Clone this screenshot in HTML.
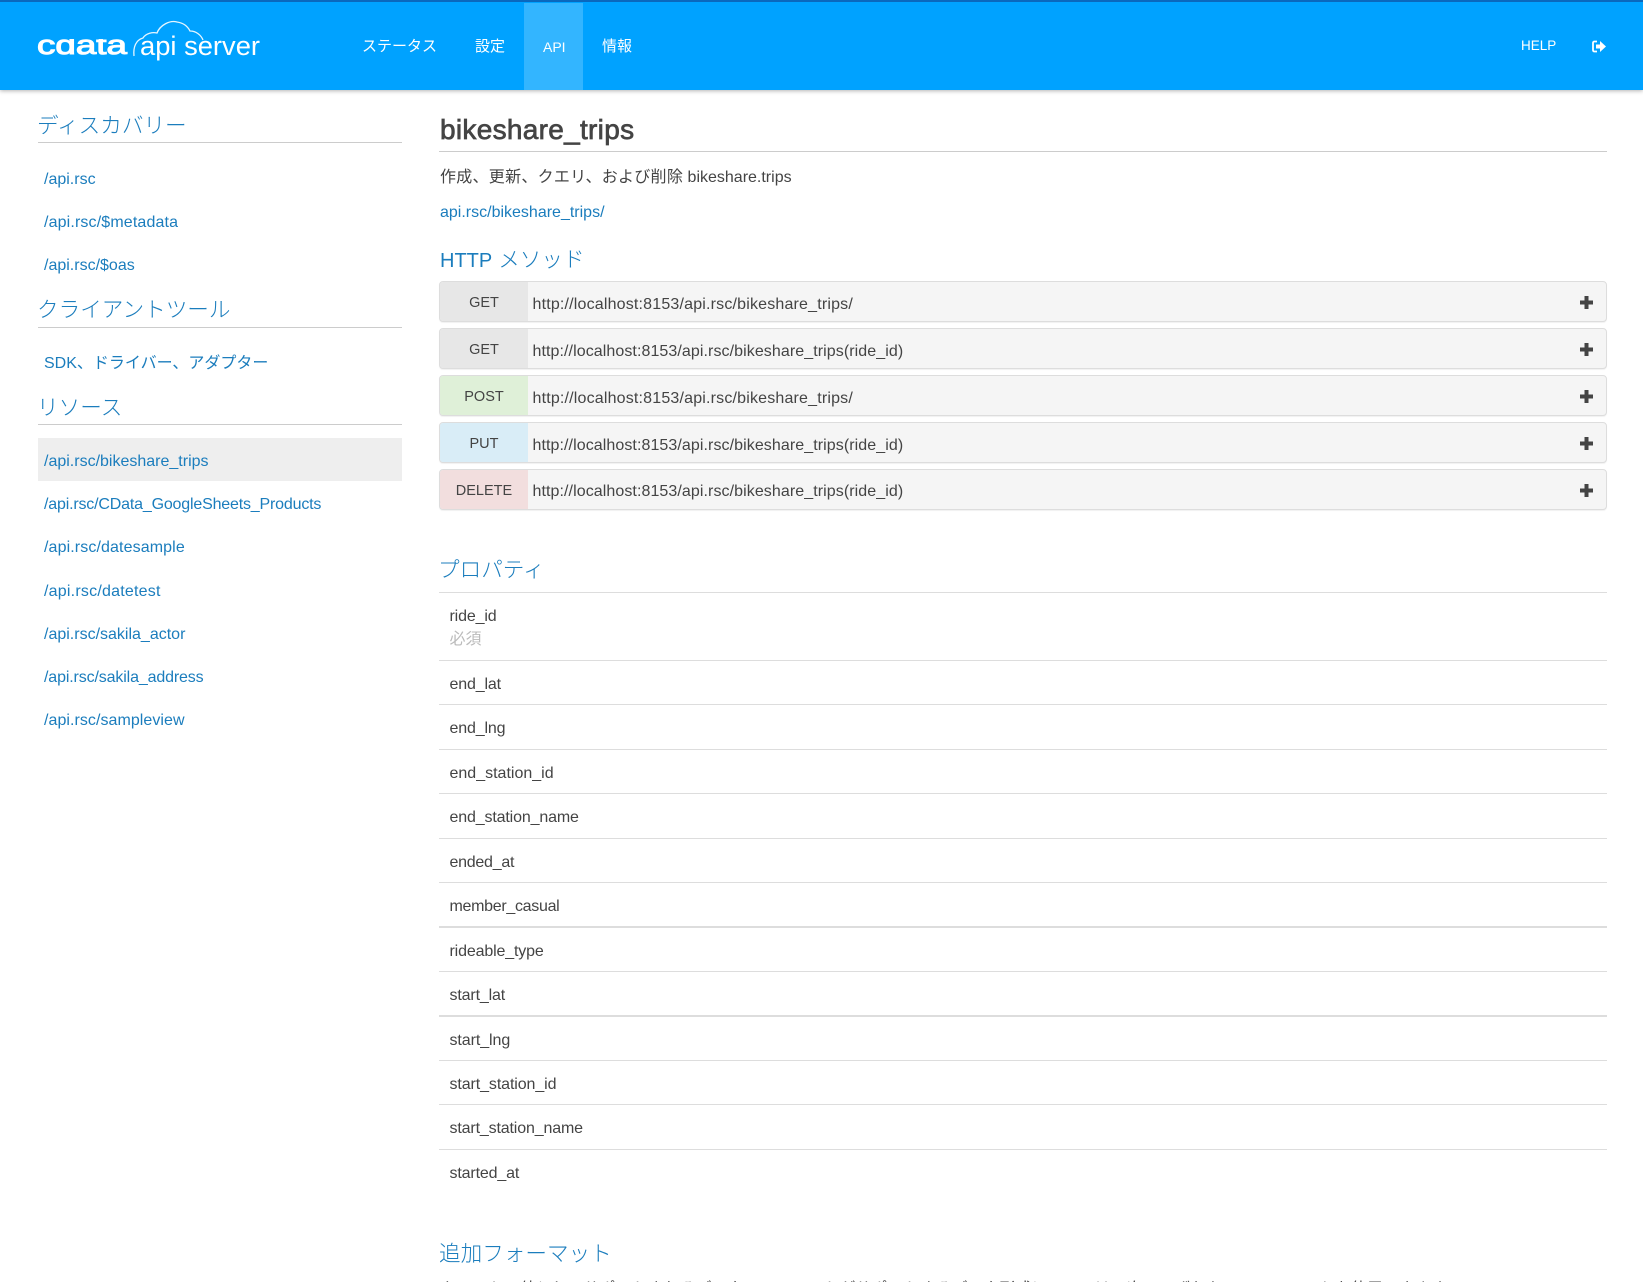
<!DOCTYPE html>
<html lang="ja"><head><meta charset="utf-8"><title>bikeshare_trips</title>
<style>
html,body{margin:0;padding:0;background:#fff;height:1282px;overflow:hidden}
#w{position:relative;width:1643px;height:1282px;overflow:hidden;font-family:"Liberation Sans","Noto Sans CJK JP",sans-serif;font-size:16px;color:#444}
.t{position:absolute;white-space:nowrap;line-height:20px;height:20px;margin-top:1px}
.a{color:#1b7dbd}
.h{color:#1b7dbd;font-size:21.600px;font-weight:300;line-height:30px;height:30px;margin-top:1px}
.n{color:#fff;font-size:15px}
.q{letter-spacing:-.15px}
.l{position:absolute;height:1px;background:#ccc}
.p{position:absolute;left:439px;width:1168px;height:1px;background:#ddd}
.r{position:absolute;left:439px;width:1166px;height:39px;border:1px solid #ddd;border-radius:4px;background:#f5f5f5;overflow:hidden;box-shadow:0 1px 1px rgba(0,0,0,.06)}
.m{position:absolute;left:0;top:4px;width:88px;height:35px;line-height:35px;text-align:center;font-size:14.500px;color:#444}
.mb{position:absolute;left:0;top:0;width:88px;height:39px}
.u{position:absolute;left:92.500px;top:3px;line-height:40px;white-space:nowrap;color:#444;letter-spacing:.08px}
.s{letter-spacing:.18px}
.x{position:absolute;left:1140px;top:14px}
</style></head><body><div id="w">
<div style="position:absolute;left:0;top:0;width:1643px;height:90px;background:#00a2ff;box-shadow:0 1px 4px rgba(0,0,0,.3)"></div>
<div style="position:absolute;left:0;top:0;width:1643px;height:2px;background:#0a68bd"></div>
<div style="position:absolute;left:524px;top:3px;width:59px;height:87px;background:#33b5ff"></div>
<svg style="position:absolute;left:0;top:0" width="300" height="90">
<defs><clipPath id="c"><rect x="30" y="39" width="100" height="16"/></clipPath></defs>
<path d="M134 56C133 47 136 40 143 38C146 33 153 32 157 33C160 25 170 20 177 22C184 23 188 27 190 31C196 31 201 35 203 40" fill="none" stroke="#fff" stroke-width="1.300" opacity=".9"/>
<g clip-path="url(#c)"><text x="37" y="54" font-family="Liberation Sans" font-size="27" fill="#fff" stroke="#fff" stroke-width="1" textLength="90" lengthAdjust="spacingAndGlyphs">cdata</text></g>
<text x="140" y="55" font-family="Liberation Sans" font-size="27" fill="#fff" textLength="120" lengthAdjust="spacingAndGlyphs">api server</text>
</svg>
<div class="t n" style="left:362px;top:36px">ステータス</div>
<div class="t n" style="left:475px;top:36px">設定</div>
<div class="t n" style="left:543px;top:36px;font-size:14px">API</div>
<div class="t n" style="left:602px;top:36px">情報</div>
<div class="t n" style="left:1521px;top:36px;font-size:13.500px;margin-top:0">HELP</div>
<svg style="position:absolute;left:1592px;top:40px" width="14" height="13" viewBox="0 0 14 13"><path d="M5 1.500H2.500Q1 1.500 1 3V10Q1 11.500 2.500 11.500H5" fill="none" stroke="#fff" stroke-width="1.800"/><path d="M4 4.500H8V1L14 6.500L8 12V8.500H4Z" fill="#fff"/></svg>

<div class="t h" style="left:37px;top:110px">ディスカバリー</div><div class="l" style="left:38px;top:142px;width:364px"></div>
<div class="t a" style="left:44px;top:169px">/api.rsc</div>
<div class="t a" style="left:44px;top:212px;letter-spacing:.14px">/api.rsc/$metadata</div>
<div class="t a" style="left:44px;top:255px">/api.rsc/$oas</div>
<div class="t h" style="left:37px;top:294px">クライアントツール</div><div class="l" style="left:38px;top:327px;width:364px"></div>
<div class="t a" style="left:44px;top:353px">SDK、ドライバー、アダプター</div>
<div class="t h" style="left:37px;top:392px">リソース</div><div class="l" style="left:38px;top:424px;width:364px"></div>
<div style="position:absolute;left:38px;top:438px;width:364px;height:43px;background:#eee"></div>
<div class="t a" style="left:44px;top:451px">/api.rsc/bikeshare_trips</div>
<div class="t a" style="left:44px;top:494px;letter-spacing:-.18px">/api.rsc/CData_GoogleSheets_Products</div>
<div class="t a" style="left:44px;top:537px;letter-spacing:.11px">/api.rsc/datesample</div>
<div class="t a" style="left:44px;top:581px;letter-spacing:.22px">/api.rsc/datetest</div>
<div class="t a" style="left:44px;top:624px">/api.rsc/sakila_actor</div>
<div class="t a" style="left:44px;top:667px;letter-spacing:-.14px">/api.rsc/sakila_address</div>
<div class="t a" style="left:44px;top:710px;letter-spacing:.05px">/api.rsc/sampleview</div>

<div class="t" style="left:440px;top:115px;height:30px;line-height:30px;font-size:28px;margin-top:0;letter-spacing:.3px;-webkit-text-stroke:.7px #444">bikeshare_trips</div>
<div class="l" style="left:439px;top:151px;width:1168px"></div>
<div class="t" style="left:440px;top:167px"><span style="letter-spacing:.27px">作成、更新、クエリ、および削除</span> bikeshare.trips</div>
<div class="t a" style="left:440px;top:202px">api.rsc/bikeshare_trips/</div>
<div class="t h" style="left:440px;top:244px"><span style="font-size:20px">HTTP</span> メソッド</div>

<div class="r" style="top:281px"><div class="mb" style="background:#e7e7e7"></div><div class="m">GET</div><div class="u s">http://localhost:8153/api.rsc/bikeshare_trips/</div><svg class="x" width="13" height="13"><path d="M4.500 0h4v4.500h4.500v4H8.500v4.500h-4V8.500H0v-4h4.500z" fill="#444"/></svg></div>
<div class="r" style="top:328px"><div class="mb" style="background:#e7e7e7"></div><div class="m">GET</div><div class="u">http://localhost:8153/api.rsc/bikeshare_trips(ride_id)</div><svg class="x" width="13" height="13"><path d="M4.500 0h4v4.500h4.500v4H8.500v4.500h-4V8.500H0v-4h4.500z" fill="#444"/></svg></div>
<div class="r" style="top:375px"><div class="mb" style="background:#dff0d8"></div><div class="m">POST</div><div class="u s">http://localhost:8153/api.rsc/bikeshare_trips/</div><svg class="x" width="13" height="13"><path d="M4.500 0h4v4.500h4.500v4H8.500v4.500h-4V8.500H0v-4h4.500z" fill="#444"/></svg></div>
<div class="r" style="top:422px"><div class="mb" style="background:#d9edf7"></div><div class="m">PUT</div><div class="u">http://localhost:8153/api.rsc/bikeshare_trips(ride_id)</div><svg class="x" width="13" height="13"><path d="M4.500 0h4v4.500h4.500v4H8.500v4.500h-4V8.500H0v-4h4.500z" fill="#444"/></svg></div>
<div class="r" style="top:469px"><div class="mb" style="background:#f2dede"></div><div class="m">DELETE</div><div class="u" style="top:2px">http://localhost:8153/api.rsc/bikeshare_trips(ride_id)</div><svg class="x" width="13" height="13"><path d="M4.500 0h4v4.500h4.500v4H8.500v4.500h-4V8.500H0v-4h4.500z" fill="#444"/></svg></div>

<div class="t h" style="left:438px;top:553.500px">プロパティ</div>
<div class="p" style="top:592px"></div>
<div class="t q" style="left:449.500px;top:606px">ride_id</div>
<div class="t" style="left:449.500px;top:629px;color:#bbb">必須</div>
<div class="p" style="top:660px"></div>
<div class="t q" style="left:449.500px;top:674px">end_lat</div>
<div class="p" style="top:704px"></div>
<div class="t q" style="left:449.500px;top:718px">end_lng</div>
<div class="p" style="top:749px"></div>
<div class="t" style="left:449.500px;top:763px">end_station_id</div>
<div class="p" style="top:793px"></div>
<div class="t q" style="left:449.500px;top:807px">end_station_name</div>
<div class="p" style="top:838px"></div>
<div class="t q" style="left:449.500px;top:852px;letter-spacing:-.26px">ended_at</div>
<div class="p" style="top:882px"></div>
<div class="t q" style="left:449.500px;top:896px;letter-spacing:-.3px">member_casual</div>
<div class="p" style="top:926px;height:2px"></div>
<div class="t q" style="left:449.500px;top:941px">rideable_type</div>
<div class="p" style="top:971px"></div>
<div class="t q" style="left:449.500px;top:985px">start_lat</div>
<div class="p" style="top:1015px;height:2px"></div>
<div class="t q" style="left:449.500px;top:1030px;letter-spacing:-.08px">start_lng</div>
<div class="p" style="top:1060px"></div>
<div class="t q" style="left:449.500px;top:1074px;letter-spacing:-.1px">start_station_id</div>
<div class="p" style="top:1104px"></div>
<div class="t q" style="left:449.500px;top:1118px">start_station_name</div>
<div class="p" style="top:1149px"></div>
<div class="t q" style="left:449.500px;top:1163px">started_at</div>

<div class="t h" style="left:439px;top:1238px">追加フォーマット</div>
<div class="t" style="left:440px;top:1279px">カレントの値としてサポートされるデータフォーマットがサポートするデータ形式については、次のいずれかのフォーマットを使用できます。</div>
</div></body></html>
